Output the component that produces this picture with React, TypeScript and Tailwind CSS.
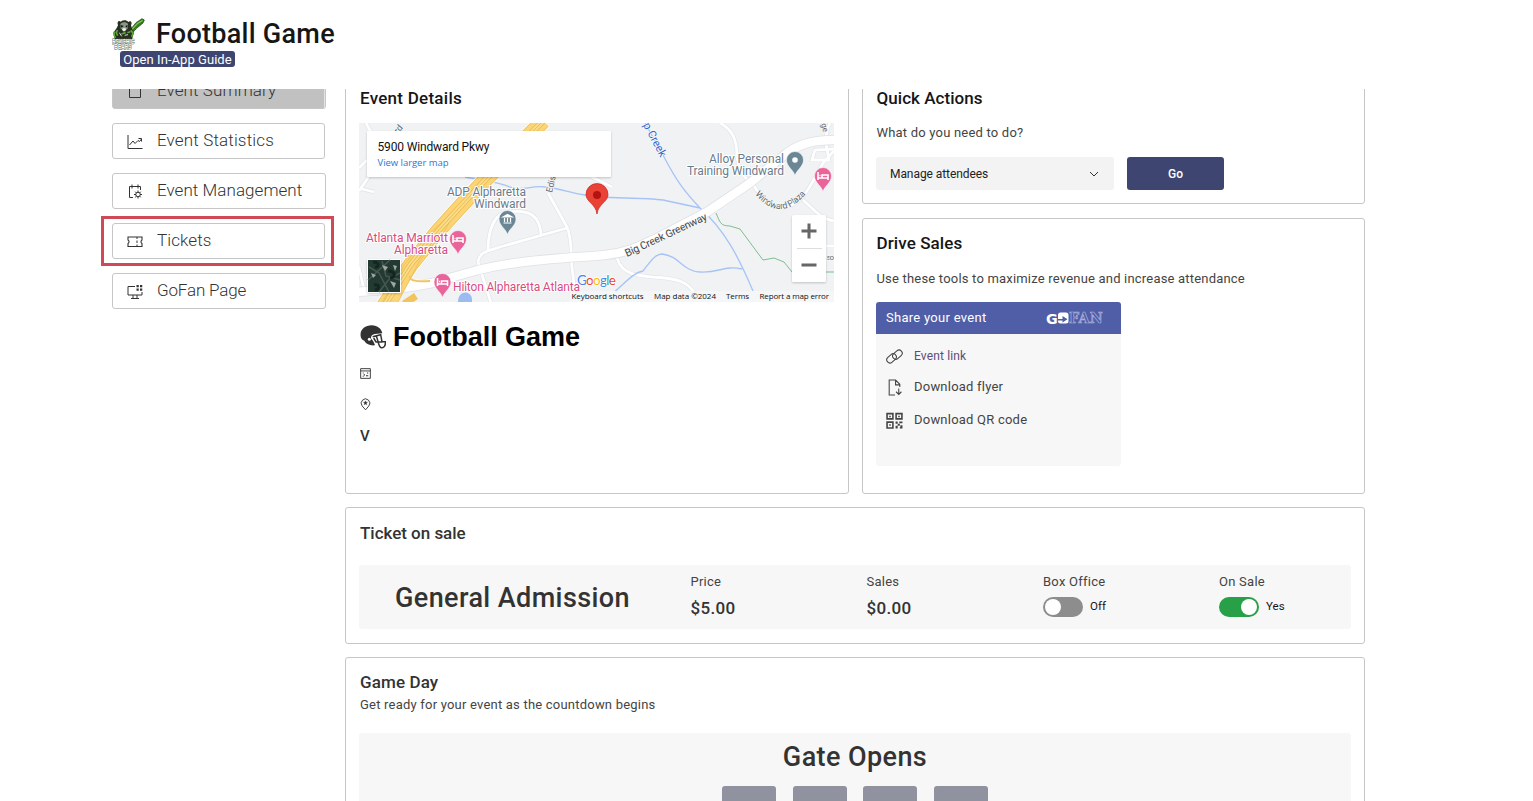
import React from "react";

const iconProps = {
  viewBox: "0 0 32 32",
  fill: "none",
  stroke: "currentColor",
  strokeWidth: 2,
} as const;

function SummaryIcon() {
  return (
    <svg {...iconProps} className="h-4 w-4">
      <path d="M5 4h22v23H5z" />
    </svg>
  );
}

function StatsIcon() {
  return (
    <svg {...iconProps} className="h-4 w-4">
      <path d="M2 2v27h29" />
      <path d="M5 22l7-8 4 5 6-6 3 2 4-5M23 9h6v6" />
    </svg>
  );
}

function ManageIcon() {
  return (
    <svg {...iconProps} className="h-4 w-4">
      <path d="M12 27H5V5h22v7M10 1v8M22 1v8" />
      <circle cx="22" cy="21" r="4.5" />
      <path d="M22 13v4M22 25v4M14 21h4M26 21h4M16.4 15.4l2.600 2.600M25 24l2.600 2.600M27.600 15.400L25 18M19 24l-2.600 2.600" />
    </svg>
  );
}

function TicketIcon() {
  return (
    <svg {...iconProps} className="h-4 w-4">
      <path d="M2 6h28v6a4 4 0 0 0 0 7v6H2v-6a4 4 0 0 0 0-7z" strokeWidth="2.200" />
      <path d="M20 6v4M20 13v5M20 21v4" />
    </svg>
  );
}

function ScreenIcon() {
  return (
    <svg {...iconProps} className="h-4 w-4">
      <path d="M16 5H2v17h28v-6M12 22v7M20 22v7M8 29h16" />
      <path d="M19 2h4.500v4.500H19zM26 2h4.500v4.500H26zM19 9h4.500v4.500H19zM26 9h4.500v4.500H26z" fill="currentColor" stroke="none" />
    </svg>
  );
}

const navItems = [
  { label: "Event Summary", icon: SummaryIcon, width: "w-[214px]", spacing: "tracking-[0.1px]", active: true },
  { label: "Event Statistics", icon: StatsIcon, width: "w-[213px]", spacing: "tracking-[0.15px]" },
  { label: "Event Management", icon: ManageIcon, width: "w-[214px]", spacing: "tracking-[0.05px]" },
  { label: "Tickets", icon: TicketIcon, width: "w-[213px]", spacing: "tracking-[0.1px]", marked: true },
  { label: "GoFan Page", icon: ScreenIcon, width: "w-[214px]", spacing: "tracking-[-0.16px]" },
];

function Sidebar() {
  return (
    <nav className="-mt-4 flex w-[214px] shrink-0 flex-col gap-[14px]">
      {navItems.map(({ label, icon: Icon, width, spacing, active, marked }) => (
        <div
          key={label}
          className={`relative flex h-9 items-center rounded-[3px] border border-[#c6c6c6] pl-[14px] text-[#333] ${width} ${active ? "bg-[#c1c1c1]" : "bg-white"}`}
        >
          <span className="mt-px flex w-4 justify-center">
            <Icon />
          </span>
          <span className={`mb-0.5 ml-[14px] text-[17px] leading-[22px] font-light ${spacing}`}>{label}</span>
          {active && <span className="absolute top-0 right-0 h-full w-px bg-[#e4e4e4]" />}
          {marked && <span className="absolute -top-2 -left-[12px] h-[50px] w-[233px] border-3 border-[#cf4a57]" />}
        </div>
      ))}
    </nav>
  );
}

function TeamLogo() {
  return (
    <svg viewBox="52 54 99 96" className="mt-0.5 h-8 w-[33px] shrink-0" fill="none">
      <path d="M103 94 124 68 142 56 149 60 145 69 126 85 108 104z" fill="#2f7d1c" stroke="#1b3a12" strokeWidth="2" />
      <path d="M108 92 129 70 144 61" stroke="#7cc24b" strokeWidth="4" />
      <path d="M70 76C66 66 72 60 78 65 86 59 96 60 101 66 108 60 114 68 109 76L112 86 118 98 112 117H60L56 98 66 84z" fill="#253021" />
      <path d="M77 72c5-7 19-7 23 0l-1 14-10 6-11-6z" fill="#8b9585" />
      <path d="M78 75l9 3-7 5zM99 75l-7 3 5 5z" fill="#111" />
      <path d="M82 88c4-5 9-5 13 0l-4 6h-6z" fill="#e8ece4" />
      <path d="M60 94c-3 8-2 14 3 19M68 90l-3 9 4 8M108 91l7 8-4 11M98 98l9-3M80 102l13-4" stroke="#5ea63a" strokeWidth="5" />
      <path d="M74 98l7 11M90 106l10-2" stroke="#d5dcd0" strokeWidth="3" />
      <g fontFamily="Liberation Sans" fontWeight="700" stroke="#4c5b44" strokeWidth="2.500" fill="#fff" paintOrder="stroke" fontSize="19">
        <text x="53" y="131" textLength="66" lengthAdjust="spacingAndGlyphs">PSYCHIC</text>
        <text x="59" y="146" textLength="52" lengthAdjust="spacingAndGlyphs">BEARS</text>
      </g>
    </svg>
  );
}

function Header() {
  return (
    <header className="relative z-10 h-[89px] bg-white pt-4 pl-[112px]">
      <div className="flex h-[35px]">
        <TeamLogo />
        <h1 className="ml-[11px] text-[27px] leading-9 font-medium tracking-[0.27px] text-[#161616]">Football Game</h1>
      </div>
      <button className="ml-2 flex h-4 w-[115px] items-center justify-center rounded-[3px] bg-[#3d4570] pt-px text-[13px] leading-4 tracking-[0.05px] whitespace-nowrap text-white">
        Open In-App Guide
      </button>
    </header>
  );
}

function Pin({ x, y, color, kind }: { x: number; y: number; color: string; kind: "bed" | "dot" | "bank" }) {
  return (
    <g transform={`translate(${x} ${y})`}>
      <path d="M0 12C-1 6-8.500 3-8.500-4a8.500 8.500 0 0 1 17 0C8.500 3 1 6 0 12z" fill={color} stroke="#fff" strokeWidth=".6" />
      {kind === "dot" && <circle cy="-4" r="2.800" fill="#fff" />}
      {kind === "bed" && <path d="M-5-8v8M-5-2H5V-5H-1V-2M5-4v4M-3.500-4.500h1" stroke="#fff" strokeWidth="1.600" fill="none" />}
      {kind === "bank" && <path d="M-4.500-6 0-8.500 4.500-6zM-4 0h8M-3-5v4M0-5v4M3-5v4" stroke="#fff" strokeWidth="1.200" fill="#fff" />}
    </g>
  );
}

function VenueMap() {
  const local =
    "M548 193 567 227C573 240 570 260 573 275L576 303M488 250C488 228 496 212 508 212 530 209 540 216 541 235M478 262C480 250 490 251 500 247L567 228M478 262 491 303M720 123C733 130 737 140 737 157 740 178 750 181 752 183 763 200 770 207 782 208 802 205 807 190 812 183L823 163 834 151M830 123C822 140 828 150 829 160H812L815 150 834 149M617 258C622 275 636 276 665 278 684 280 690 285 700 300M803 200C815 210 820 219 834 221M359 191 374 169M359 168 367 160M362 189 374 192M359 267 364 290M366 123 372 134M590 176 612 187M824 246H834";
  const creek = "M465 177C485 181 498 182 510 187S530 185 546 187 570 193 585 195C600 199 640 197 663 200L700 208M645 123 663 155C677 182 685 192 700 208 725 230 739 258 753 291M600 302C620 291 630 273 643 271 650 262 655 254 662 254 680 256 682 271 700 272 720 273 724 265 742 269";
  const greenway = "M350 292C380 291 405 289 432 283L478 270C520 260 556 259 605 255 627 253 640 246 657 238L707 212 750 183 787 153C802 142 817 140 838 140";
  const highway = "M384 306 411 264 438 231 458 209 486 179 543 121";
  return (
    <svg viewBox="359 123 475 179" className="block h-[179px] w-[475px]" fill="none" fontFamily="Roboto, sans-serif">
      <path d="M359 123h475v179H359z" fill="#f0f2f4" />
      <path d={local} stroke="#dfe3e7" strokeWidth="4" />
      <path d={local} stroke="#fff" strokeWidth="2.800" />
      <path d={creek} stroke="#a7c3f5" strokeWidth="1.300" />
      <path d="M716 213C720 222 720 226 730 226L740 229 763 260 774 258 784 262 792 272H834" stroke="#80bd91" />
      <path d={greenway} stroke="#dde1e5" strokeWidth="10" />
      <path d={greenway} stroke="#fff" strokeWidth="8.500" />
      <path d="M399 290 411 272C405 285 418 282 440 282" stroke="#fff" strokeWidth="5" />
      <path d="M404 304 416 296" stroke="#f2c45e" strokeWidth="7" />
      <path d={highway} stroke="#fff" strokeWidth="17" />
      <path d={highway} stroke="#edbd55" strokeWidth="15.500" />
      <path d={highway} stroke="#fbd575" strokeWidth="14" />
      <path d="M380 306 405 264 425 238 458 207 444 232 420 260 396 306z" fill="#fbd575" stroke="#edbd55" strokeWidth=".8" />
      <path d={highway} stroke="#eab84b" strokeWidth="6" />
      <path d={highway} stroke="#fbdc8a" strokeWidth="4.600" />
      <path d={highway} stroke="#eab84b" strokeWidth=".9" />
      <path d="M410 276C409 280 414 282 430 281" stroke="#f2c45e" strokeWidth="2" />
      <path d="M458 302c0-12 13-12 14-3v3z" fill="#9bbcf3" />
      <g fontSize="12" strokeWidth="2" stroke="#fff" paintOrder="stroke">
        <g fill="#6a7b89">
          <text x="447" y="196" textLength="79">ADP Alpharetta</text>
          <text x="474" y="208" textLength="52">Windward</text>
          <text x="709" y="163" textLength="75">Alloy Personal</text>
          <text x="687" y="175" textLength="97">Training Windward</text>
        </g>
        <g fill="#d64c81">
          <text x="366" y="242" textLength="82">Atlanta Marriott</text>
          <text x="394" y="254" textLength="54">Alpharetta</text>
          <text x="453" y="291" textLength="127">Hilton Alpharetta Atlanta</text>
        </g>
      </g>
      <g stroke="#f6f7f8" strokeWidth="1.500" paintOrder="stroke">
        <text transform="translate(627 257) rotate(-25)" fontSize="10.500" textLength="89" fill="#3f464c">Big Creek Greenway</text>
        <text transform="translate(643 125) rotate(62)" fontSize="11" textLength="37" fill="#2c66cf">p Creek</text>
        <text transform="translate(552 193) rotate(-77)" fontSize="9" fill="#626970">Edis</text>
        <path id="plaza" d="M755 194C772 215 791 214 808 191" stroke="none" />
        <text fontSize="9" fill="#626970"><textPath href="#plaza" textLength="61">Windward Plaza</textPath></text>
        <text transform="translate(821 124) rotate(75)" fontSize="8" fill="#626970">ge</text>
        <text transform="translate(398 134) rotate(-50)" fontSize="9" fill="#626970">rd</text>
        <text x="826" y="260" fontSize="8" fill="#626970" textLength="8">.so</text>
      </g>
      <Pin x={507.5} y={223} color="#6b8796" kind="bank" />
      <Pin x={458} y={243} color="#e8649a" kind="bed" />
      <Pin x={442.5} y={286} color="#e8649a" kind="bed" />
      <Pin x={795} y={164} color="#6b8796" kind="dot" />
      <Pin x={823} y={180} color="#e8649a" kind="bed" />
      <path d="M597 214C596 204 586 202 586 194.500a11 11 0 0 1 22 0C608 202 598 204 597 214z" fill="#ea4335" stroke="#c5221f" strokeWidth=".7" />
      <circle cx="597" cy="195" r="4" fill="#b31412" />

      <g style={{ filter: "drop-shadow(0 1px 1px #0003)" }}>
        <rect x="367" y="131" width="244" height="46" rx="1" fill="#fff" />
        <rect x="792" y="215" width="34" height="67" rx="1.500" fill="#fff" />
        <rect x="367" y="259" width="34" height="34" rx="1" fill="#fff" />
      </g>
      <text x="377.500" y="151" fontSize="12" fill="#111" textLength="112">5900 Windward Pkwy</text>
      <text x="377.500" y="166" fontSize="9.500" fill="#2b76d2" fontFamily="Open Sans" textLength="71">View larger map</text>
      <path d="M797 248.500h25" stroke="#ddd" />
      <path d="M801.500 231h15M809 223.500v15M801.500 265h15" stroke="#666" strokeWidth="3" />

      <rect x="368" y="260" width="32" height="32" fill="#233a32" />
      <path d="M368 280 390 260M379 292 390 278 400 273M382 261 386 276 400 280M369 267 379 273 389 292" stroke="#465850" strokeWidth="1.500" />
      <path d="m382 265 6 2-3 4zM390 281l6 2-2 5zM371 273l5 2-3 3zM393 265l4 1-2 5z" fill="#a0a7a3" />
      <path d="M373 262c7 0 6 6 2 5M388 271c8 0 8 7 2 7M374 285c6-1 6 4 1 5" stroke="#14271f" strokeWidth="3" />

      <text x="577" y="285" fontSize="13.500" fontFamily="Lato" stroke="#fff" strokeWidth="1.500" paintOrder="stroke" textLength="39">
        <tspan fill="#4285f4">G</tspan><tspan fill="#ea4335">o</tspan><tspan fill="#fbbc04">o</tspan><tspan fill="#4285f4">g</tspan><tspan fill="#34a853">l</tspan><tspan fill="#ea4335">e</tspan>
      </text>
      <path d="M570 291h264v11H570z" fill="#f5f6f7" />
      <g fontSize="8" fill="#111" fontFamily="Open Sans">
        <text x="571.500" y="299" textLength="72">Keyboard shortcuts</text>
        <text x="654" y="299" textLength="62">Map data ©2024</text>
        <text x="726" y="299" textLength="23">Terms</text>
        <text x="759.500" y="299" textLength="69.500">Report a map error</text>
      </g>
    </svg>
  );
}

function HelmetIcon() {
  return (
    <svg viewBox="45 78 78 72" className="h-6 w-[26px]">
      <path d="M47 112C44 92 60 79 80 79 98 79 110 90 112 103L90 105C79 107 76 114 79 120L84 125 90 138C87 140 82 140 76 138 66 136 60 130 58 125 51 123 48 119 47 112z" fill="#333" />
      <circle cx="73" cy="121" r="4.500" fill="#fff" />
      <path d="M83 113 107 107 111 128H121C122 141 117 147 109 146 101 145 103 137 94 111M86 117 93 129H112" fill="none" stroke="#333" strokeWidth="4.500" />
    </svg>
  );
}

function EventDetails() {
  return (
    <section className="h-[425px] w-[504px] rounded-[3px] border border-[#c6c6c6] bg-white px-[13px]">
      <h2 className="mt-4 ml-[1px] text-[17px] leading-6 font-medium tracking-[0.26px] text-[#161616]">Event Details</h2>
      <div className="mt-[13px]">
        <VenueMap />
      </div>
      <div className="mt-[19px] ml-[1px] flex h-8 items-center gap-[7px]">
        <HelmetIcon />
        <h3 className="font-['Liberation_Sans'] text-[27px] leading-8 font-bold tracking-[-0.05px] text-black">Football Game</h3>
      </div>
      <div className="-mt-px ml-[1px] flex flex-col text-[#333]">
        <div className="flex h-[31px] items-end pb-[4px]">
          <svg viewBox="0 0 12 12" className="h-[11px] w-[11px]" fill="none" stroke="currentColor">
            <path d="M.700.700h10.600v10.600H.700zM.700 3.200h10.600" />
            <path d="M3 5.500h1M7.500 5.500h1.500M4 7.500h1.500M3 9h1M6.500 8.500h2.500" strokeWidth="1.100" />
          </svg>
        </div>
        <div className="flex h-[31px] items-end pb-[3px]">
          <svg viewBox="0 0 12 14" className="h-[13px] w-[11px]" fill="none" stroke="currentColor">
            <path d="M6 12.800 2.300 8.500a4.700 4.700 0 1 1 7.400 0z" />
            <path d="m6 3 .6 1.500 1.600.1L7 5.700l.4 1.600L6 6.500l-1.400.8.4-1.600-1.200-1.100 1.600-.1z" fill="currentColor" strokeWidth=".4" />
          </svg>
        </div>
        <span className="mt-[13px] text-[15px] leading-[18px] font-medium">V</span>
      </div>
    </section>
  );
}

function QuickActions() {
  return (
    <section className="h-[135px] rounded-[3px] border border-[#c6c6c6] bg-white px-[13px]">
      <h2 className="mt-4 ml-[0.5px] text-[17px] leading-6 font-medium tracking-[0.05px] text-[#161616]">Quick Actions</h2>
      <p className="mt-[13px] ml-[0.5px] text-[13px] leading-5 tracking-[0.2px] text-[#444]">What do you need to do?</p>
      <div className="mt-[14px] flex gap-[13px]">
        <div className="flex h-[33px] w-[238px] items-center justify-between rounded-[3px] bg-[#f3f3f3] pr-[15px] pl-[14px] text-[12px] tracking-[-0.07px] text-[#222]">
          <span>Manage attendees</span>
          <svg viewBox="0 0 10 6" className="h-[6px] w-[10px]" fill="none" stroke="#333">
            <path d="m1 1 4 4 4-4" />
          </svg>
        </div>
        <button className="h-[33px] w-[97px] rounded-[3px] bg-[#3d4570] text-[12px] font-medium text-white">Go</button>
      </div>
    </section>
  );
}

function GoFanLogo() {
  return (
    <svg viewBox="0 0 58 14" className="h-[14px] w-[58px]">
      <g fontFamily="DejaVu Sans, sans-serif" fontWeight="700">
        <text x="0" y="12.500" fontSize="14.500" fill="#fff" textLength="12" lengthAdjust="spacingAndGlyphs">G</text>
        <rect x="12" y="1.500" width="10.500" height="11" rx="2.500" fill="#fff" />
        <path d="M12 8H16.500V5L21.500 8.300l-5 3.200V9.500H12z" fill="#505ea7" />
        <text x="23" y="12.300" fontSize="14.500" fontFamily="DejaVu Serif, serif" fill="none" stroke="#aab2dc" strokeWidth=".7" textLength="34" lengthAdjust="spacingAndGlyphs">FAN</text>
      </g>
    </svg>
  );
}

function LinkIcon() {
  return (
    <svg {...iconProps} className="h-[17px] w-[17px]">
      <rect x="0.500" y="13.500" width="20" height="12" rx="6" transform="rotate(-42 10.500 19.500)" />
      <rect x="11.500" y="6.500" width="20" height="12" rx="6" transform="rotate(-42 21.500 12.500)" />
    </svg>
  );
}

function FlyerIcon() {
  return (
    <svg {...iconProps} className="h-[17px] w-[17px]">
      <path d="M17 30H6V2h12l8 8v5M18 2v9h8M24 18v10M19 24l5 5 5-5" />
    </svg>
  );
}

function QrIcon() {
  return (
    <svg viewBox="0 0 32 32" fill="none" stroke="currentColor" strokeWidth="3" className="h-[17px] w-[17px]">
      <path d="M2 3h11v10H2zM19 3h11v10H19zM2 19h11v11H2z" />
      <path d="M6 7h3v3H6zM23 7h3v3h-3zM6 23h3v3H6zM18 18h4v4h-4zM25 18h6v3h-6zM22 22h4v4h-4zM18 26h4v5h-4zM27 25h4v6h-5v-3h1z" fill="currentColor" stroke="none" />
    </svg>
  );
}

function DriveSales() {
  return (
    <section className="h-[276px] rounded-[3px] border border-[#c6c6c6] bg-white px-[13px]">
      <h2 className="mt-[12px] ml-[0.5px] text-[17px] leading-6 font-medium tracking-[0.1px] text-[#161616]">Drive Sales</h2>
      <p className="mt-[14px] ml-[0.5px] text-[13px] leading-5 tracking-[0.195px] text-[#444]">Use these tools to maximize revenue and increase attendance</p>
      <div className="mt-[13px] h-[164px] w-[245px] overflow-hidden rounded-[3px] bg-[#f7f7f7] text-[#444]">
        <div className="flex h-8 items-center justify-between bg-[#505ea7] pr-[17px] pl-[10px] text-[13px] tracking-[0.28px] text-white">
          <span>Share your event</span>
          <GoFanLogo />
        </div>
        <div className="mt-[11px] flex h-[22px] items-center gap-[11px] pl-[10px]">
          <LinkIcon />
          <span className="text-[12px] tracking-[0.15px] text-[#5c4c78]">Event link</span>
        </div>
        <div className="mt-[9px] flex h-[22px] items-center gap-[11px] pl-[10px]">
          <FlyerIcon />
          <span className="text-[13px] tracking-[0.22px]">Download flyer</span>
        </div>
        <div className="mt-[11px] flex h-[22px] items-center gap-[11px] pl-[10px]">
          <QrIcon />
          <span className="text-[13px] tracking-[0.22px]">Download QR code</span>
        </div>
      </div>
    </section>
  );
}

function Toggle({ on, label }: { on: boolean; label: string }) {
  return (
    <div className="mt-[6px] flex items-center">
      <span className={`flex h-5 w-10 items-center rounded-full px-[2px] ${on ? "justify-end bg-[#27a048]" : "justify-start bg-[#8d8d8d]"}`}>
        <span className="h-4 w-4 rounded-full bg-white" />
      </span>
      <span className="mb-0.5 ml-[7px] text-[11.5px] leading-4 tracking-[0.05px] text-[#161616]">{label}</span>
    </div>
  );
}

function TicketOnSale() {
  return (
    <section className="h-[137px] rounded-[3px] border border-[#c6c6c6] bg-white px-[13px]">
      <h2 className="mt-[13px] ml-[1px] text-[17px] leading-6 font-medium tracking-[-0.02px] text-[#333]">Ticket on sale</h2>
      <div className="mt-[20px] flex h-16 w-[992px] rounded-[3px] bg-[#f7f7f7] pt-2 text-[13px] leading-[18px] tracking-[0.25px] text-[#444]">
        <div className="w-[331px] pl-[36px] text-[27px] leading-[50px] font-medium tracking-[0.4px] text-[#333]">General Admission</div>
        <div className="w-44 pl-[0.5px]">
          <div>Price</div>
          <div className="mt-[7px] text-[17px] leading-5 font-medium tracking-[0.35px] text-[#333]">$5.00</div>
        </div>
        <div className="w-44 pl-[0.5px]">
          <div>Sales</div>
          <div className="mt-[7px] text-[17px] leading-5 font-medium tracking-[0.35px] text-[#333]">$0.00</div>
        </div>
        <div className="w-44 pl-[1px]">
          <div>Box Office</div>
          <Toggle on={false} label="Off" />
        </div>
        <div className="pl-[1px]">
          <div>On Sale</div>
          <Toggle on label="Yes" />
        </div>
      </div>
    </section>
  );
}

function GameDay() {
  return (
    <section className="h-[300px] rounded-[3px] border border-[#c6c6c6] bg-white px-[13px]">
      <h2 className="mt-[12px] ml-[1px] text-[17px] leading-6 font-medium tracking-[0.12px] text-[#333]">Game Day</h2>
      <p className="mt-px ml-[1px] text-[13px] leading-5 tracking-[0.21px] text-[#444]">Get ready for your event as the countdown begins</p>
      <div className="mt-[18px] h-[200px] w-[992px] rounded-[3px] bg-[#f7f7f7] pt-[6px]">
        <h3 className="text-center text-[27px] leading-9 font-medium tracking-[0.4px] text-[#333]">Gate Opens</h3>
        <div className="mt-[11px] flex justify-center gap-[16.600px]">
          {[0, 1, 2, 3].map((i) => (
            <div key={i} className="h-[70px] w-[54px] rounded-[3px] bg-[#9192a0]" />
          ))}
        </div>
      </div>
    </section>
  );
}

export default function App() {
  return (
    <div className="h-[801px] w-full overflow-hidden bg-white font-[Roboto,sans-serif]">
      <Header />
      <main className="flex h-[712px] items-start overflow-hidden pl-[112px]">
        <Sidebar />
        <div className="-mt-5 ml-[19px] flex w-[1020px] flex-col gap-[13px]">
          <div className="flex gap-[13px]">
            <EventDetails />
            <div className="flex w-[503px] flex-col gap-[14px]">
              <QuickActions />
              <DriveSales />
            </div>
          </div>
          <TicketOnSale />
          <GameDay />
        </div>
      </main>
    </div>
  );
}
